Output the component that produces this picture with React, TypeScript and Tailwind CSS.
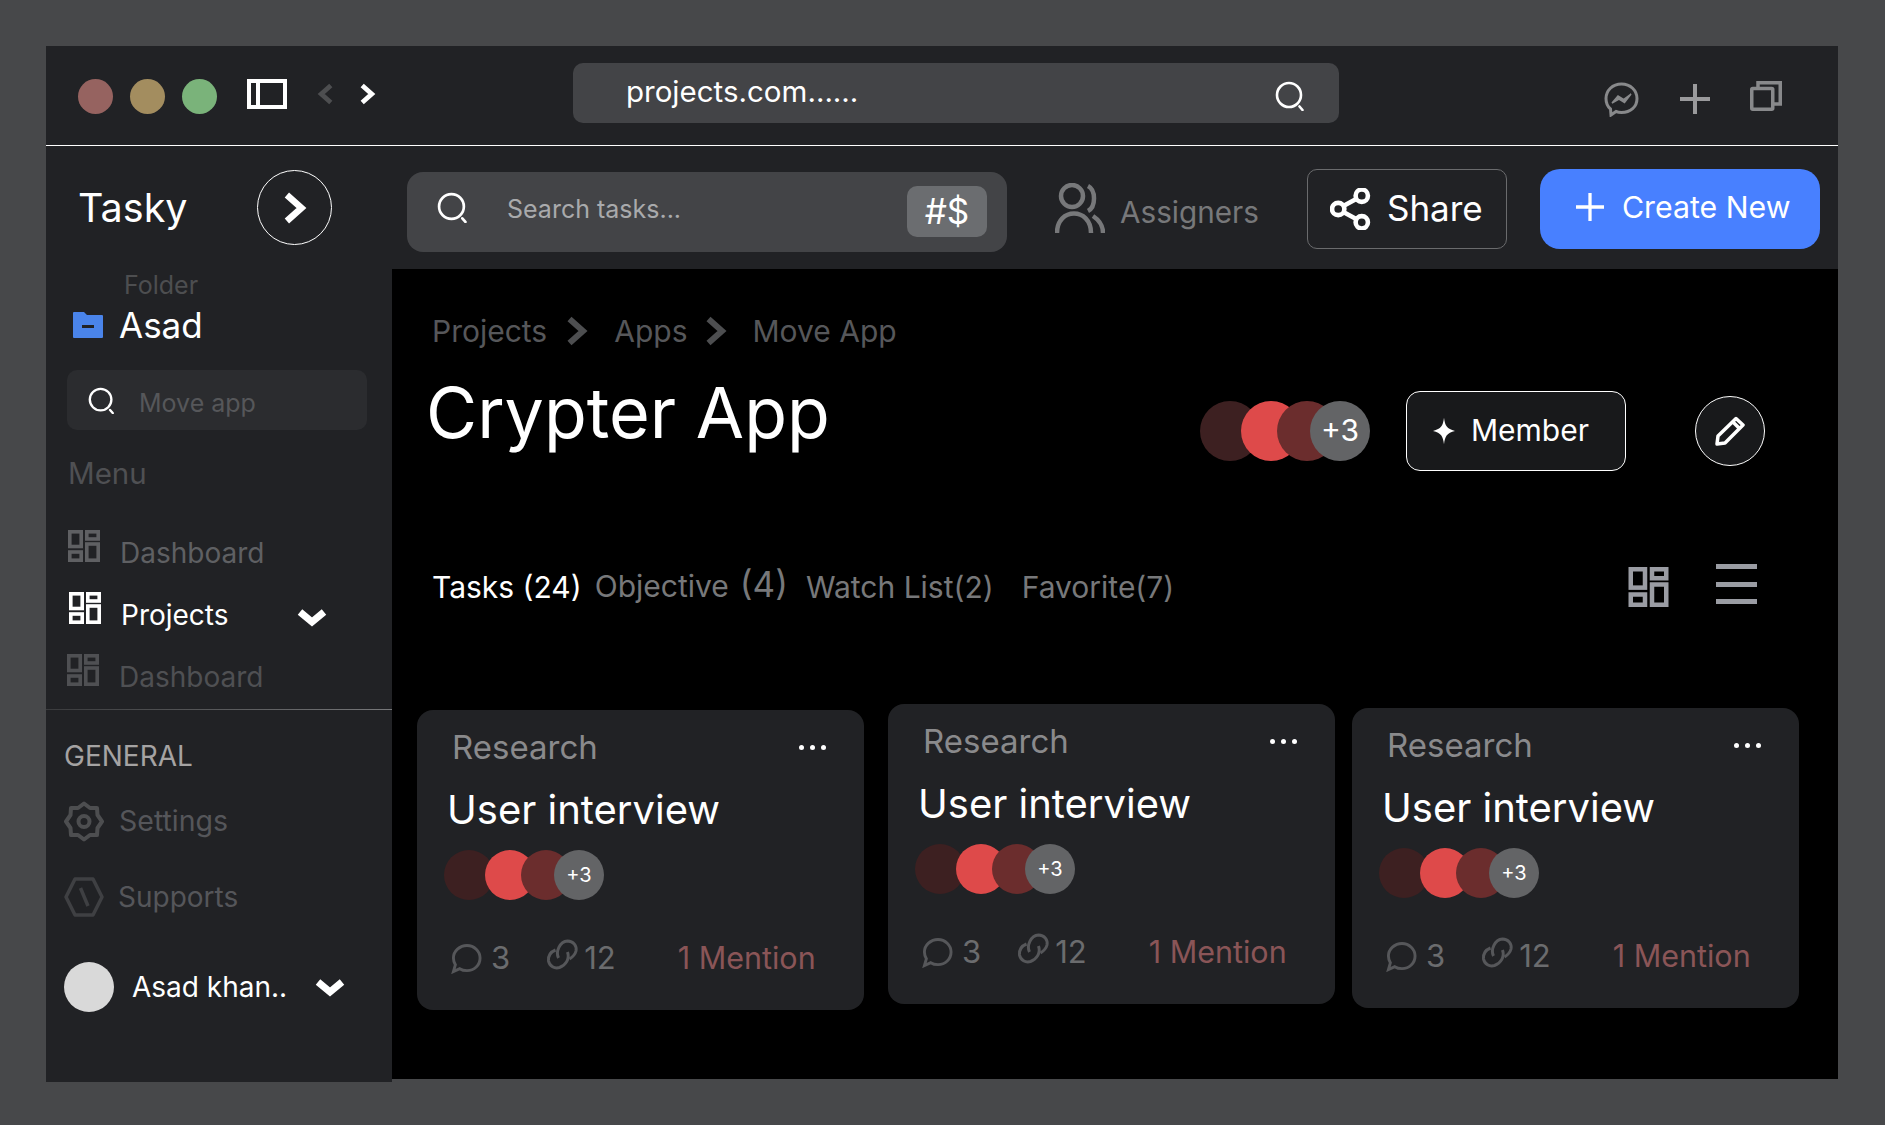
import React from 'react';

function Lens({ className }: { className: string }) {
  return (
    <svg className={className} viewBox="0 0 30 30" fill="none" stroke="currentColor" strokeWidth={2.6}>
      <circle cx="14" cy="14" r="12" />
      <path d="M24.5 25.5 L27.5 29" strokeLinecap="round" />
    </svg>
  );
}

function Chevron({ className, width = 4 }: { className: string; width?: number }) {
  return (
    <svg className={className} viewBox="0 0 16 20" fill="none" stroke="currentColor" strokeWidth={width}>
      <path d="M3 2 L12 10 L3 18" />
    </svg>
  );
}

function ChevronDown({ className }: { className: string }) {
  return (
    <svg className={className} viewBox="0 0 30 20" fill="none" stroke="currentColor" strokeWidth={7}>
      <path d="M3 5 L15 15 L27 5" />
    </svg>
  );
}

function PlusMark({ className, width = 4 }: { className: string; width?: number }) {
  return (
    <svg className={className} viewBox="0 0 30 30" fill="none" stroke="currentColor" strokeWidth={width}>
      <path d="M15 0 L15 30 M0 15 L30 15" />
    </svg>
  );
}

function GridIcon({ className }: { className: string }) {
  return (
    <svg className={className} viewBox="0 0 32 32" fill="none" stroke="currentColor" strokeWidth={3.6}>
      <rect x="1.8" y="1.8" width="11.4" height="14.7" />
      <rect x="18.8" y="1.8" width="11.4" height="7.2" />
      <rect x="1.8" y="22" width="11.4" height="8.2" />
      <rect x="18.8" y="14" width="11.4" height="16.2" />
    </svg>
  );
}

function NavRow({ label, className, textClass }: { label: string; className: string; textClass: string }) {
  return (
    <div className={`flex h-[40px] items-start ${className}`}>
      <GridIcon className={`h-[32px] w-[32px] ${textClass}`} />
      <span className={`ml-[20px] pt-[3px] text-[28px] leading-[40px] ${textClass}`}>{label}</span>
    </div>
  );
}

function Stack({ small }: { small: boolean }) {
  const size = small ? 'h-[50px] w-[50px]' : 'h-[60px] w-[60px]';
  return (
    <div className="flex items-center">
      <div className={`rounded-full bg-[#3d2021] ${size}`} />
      <div className={`rounded-full bg-[#de4a4a] ${size} ${small ? '-ml-[9px]' : '-ml-[19px]'}`} />
      <div className={`rounded-full bg-[#6b2d2d] ${size} ${small ? '-ml-[14px]' : '-ml-[24px]'}`} />
      <div
        className={`flex items-center justify-center rounded-full bg-[#636466] text-white ${size} ${
          small ? '-ml-[17px] text-[20px]' : '-ml-[27px] text-[30px]'
        }`}
      >
        +3
      </div>
    </div>
  );
}

function Card({ className }: { className: string }) {
  return (
    <div className={`h-[300px] w-[447px] rounded-[16px] bg-[#212225] pt-[17px] ${className}`}>
      <div className="flex h-[40px] items-center justify-between pl-[35px] pr-[38px]">
        <span className="text-[33px] leading-[40px] text-[#8a8a8c]">Research</span>
        <div className="flex gap-[6px]">
          <div className="h-[5px] w-[5px] rounded-full bg-white" />
          <div className="h-[5px] w-[5px] rounded-full bg-white" />
          <div className="h-[5px] w-[5px] rounded-full bg-white" />
        </div>
      </div>
      <div className="mt-[19px] pl-[30px] text-[40px] leading-[48px] text-white">User interview</div>
      <div className="mt-[16px] pl-[27px]">
        <Stack small />
      </div>
      <div className="mt-[43px] flex h-[30px] items-center pl-[34px] text-[31px] text-[#6b6c6e]">
        <svg className="h-[31px] w-[31px] text-[#56575a]" viewBox="0 0 32 32" fill="none" stroke="currentColor" strokeWidth={3}>
          <path d="M16.5 2.5 C24 2.5 30 8.5 30 15.5 C30 23 24 28.5 16.5 28.5 C13.5 28.5 11 27.8 9 26.5 L2.5 29.5 L4.5 22.5 C3.3 20.5 2.5 18 2.5 15.5 C2.5 8.5 9 2.5 16.5 2.5 Z" />
        </svg>
        <span className="ml-[9px]">3</span>
        <svg className="-mt-[6px] ml-[36px] h-[32px] w-[33px] text-[#56575a]" viewBox="0 0 32 32" fill="none" stroke="currentColor" strokeWidth={3}>
          <path d="M12 19 C9 13 13 2.5 21 2 C27 2 30.5 7 29.5 12 C28.5 16 26 18 23 20" />
          <path d="M9 11 C4 13 1.5 17 2 22 C3 27 8 30 13 28.5 C19 26.5 23.5 20 21 13" />
        </svg>
        <span className="ml-[5px]">12</span>
        <span className="ml-[62px] text-[30.5px] text-[#8a5557]">1 Mention</span>
      </div>
    </div>
  );
}

function Sidebar() {
  return (
    <aside className="w-[346px] shrink-0 bg-[#212225]">
      <div className="flex h-[123px] items-center pl-[32px]">
        <span className="mt-[2px] w-[110px] text-[39.5px] leading-none text-white">Tasky</span>
        <div className="ml-[69px] flex h-[75px] w-[75px] items-center justify-center rounded-full border border-white">
          <Chevron className="h-[34px] w-[26px] text-white" />
        </div>
      </div>
      <div className="pl-[78px] pt-[1px] text-[25px] leading-[30px] text-[#4d4e50]">Folder</div>
      <div className="mt-[7px] flex h-[36px] items-center pl-[27px]">
        <svg className="h-[26px] w-[30px]" viewBox="0 0 30 26">
          <path d="M0 1 Q0 0 1 0 L11 0 L14 3 L29 3 Q30 3 30 4 L30 25 Q30 26 29 26 L1 26 Q0 26 0 25 Z" fill="#4a84ea" />
          <rect x="9" y="13" width="12" height="3" fill="#212225" />
        </svg>
        <span className="ml-[16px] text-[35px] leading-[36px] text-white">Asad</span>
      </div>
      <div className="ml-[21px] mt-[27px] flex h-[60px] w-[300px] items-center rounded-[10px] bg-[#2b2c2f] pl-[21px]">
        <Lens className="h-[27px] w-[27px] text-white" />
        <span className="ml-[24px] mt-[8px] text-[25px] text-[#56575a]">Move app</span>
      </div>
      <div className="mt-[25px] pl-[22px] text-[29.5px] leading-[36px] text-[#4f5053]">Menu</div>
      <NavRow label="Dashboard" className="ml-[22px] mt-[39px]" textClass="text-[#5f6063]" />
      <div className="relative">
        <NavRow label="Projects" className="ml-[23px] mt-[22px]" textClass="text-white" />
        <ChevronDown className="absolute left-[251px] top-[15px] h-[20px] w-[30px] text-white" />
      </div>
      <NavRow label="Dashboard" className="ml-[21px] mt-[22px]" textClass="text-[#4f5053]" />
      <div className="mt-[15px] h-px bg-gradient-to-r from-[#3a3b3d] to-[#77787a]" />
      <div className="mt-[28px] pl-[18px] text-[28px] leading-[36px] text-[#a5a3a3]">GENERAL</div>
      <div className="mt-[27px] flex h-[41px] items-center pl-[18px]">
        <svg className="h-[41px] w-[40px] text-[#4d4e50]" viewBox="0 0 40 41" fill="none" stroke="currentColor" strokeWidth={4}>
          <path d="M20 2.5 L26 7 L33 7 L33.5 14 L38 20.5 L33.5 27 L33 34 L26 34 L20 38.5 L14 34 L7 34 L6.5 27 L2 20.5 L6.5 14 L7 7 L14 7 Z" strokeLinejoin="round" />
          <circle cx="20" cy="20.5" r="5.5" />
        </svg>
        <span className="ml-[15px] text-[28.5px] text-[#55565a]">Settings</span>
      </div>
      <div className="mt-[35px] flex h-[40px] items-center pl-[18px]">
        <svg className="h-[40px] w-[40px] text-[#3f4043]" viewBox="0 0 40 40" fill="none" stroke="currentColor" strokeWidth={3.5}>
          <path d="M11 2 L29 2 L38 20 L29 38 L11 38 L2 20 Z" strokeLinejoin="round" />
          <path d="M16.5 11 L24 29" />
        </svg>
        <span className="ml-[14px] text-[28px] text-[#55565a]">Supports</span>
      </div>
      <div className="mt-[45px] flex h-[50px] items-center pl-[18px]">
        <div className="h-[50px] w-[50px] rounded-full bg-[#d9d9d9]" />
        <span className="ml-[18px] text-[28px] text-white">Asad khan..</span>
        <ChevronDown className="ml-[28px] h-[20px] w-[30px] text-white" />
      </div>
    </aside>
  );
}

function TopRow() {
  return (
    <div className="flex h-[123px] items-center bg-[#212225]">
      <div className="ml-[15px] mt-[8px] flex h-[80px] w-[600px] items-center rounded-[16px] bg-[#434447] pl-[30px]">
        <Lens className="-mt-[8px] h-[31px] w-[31px] text-white" />
        <span className="ml-[39px] -mt-[3px] text-[25px] text-[#a9aaac]">Search tasks...</span>
        <div className="ml-auto mr-[20px] flex h-[51px] w-[80px] items-center justify-center rounded-[10px] bg-[#6b6d70] text-[35px] text-white">#$</div>
      </div>
      <svg className="ml-[48px] h-[50px] w-[50px] text-[#77787a]" viewBox="0 0 50 50" fill="none" stroke="currentColor" strokeWidth={4.5}>
        <circle cx="17" cy="13" r="11" />
        <path d="M33 3 C41 7 41 24 33 28" />
        <path d="M2 50 C2 24 36 24 36 50" />
        <path d="M38 33 C44 37 48 43 48 50" />
      </svg>
      <span className="ml-[15px] mt-[10px] text-[29.7px] text-[#77787a]">Assigners</span>
      <div className="ml-[48px] mt-[2px] flex h-[80px] w-[200px] items-center rounded-[10px] border border-[#6a6b6d] pl-[22px] text-white">
        <svg className="h-[42px] w-[41px]" viewBox="0 0 40 40" fill="none" stroke="currentColor" strokeWidth={4.5}>
          <circle cx="8" cy="20" r="6" />
          <circle cx="31" cy="7" r="6" />
          <circle cx="31" cy="33" r="6" />
          <path d="M13 17 L26 10 M13 23 L26 30" />
        </svg>
        <span className="ml-[16px] text-[35px]">Share</span>
      </div>
      <div className="ml-[33px] mt-[2px] flex h-[80px] w-[280px] items-center rounded-[20px] bg-[#4880ff] pl-[36px] text-white">
        <PlusMark className="-mt-[4px] h-[28px] w-[28px]" width={3.5} />
        <span className="ml-[18px] -mt-[2px] text-[30.3px]">Create New</span>
      </div>
    </div>
  );
}

function Content() {
  return (
    <div className="flex-1 bg-black">
      <div className="mt-[44px] flex h-[36px] items-center pl-[40px] text-[30px] text-[#56575a]">
        <span>Projects</span>
        <Chevron className="ml-[18px] h-[34px] w-[24px] text-[#4d4e50]" />
        <span className="ml-[25px]">Apps</span>
        <Chevron className="ml-[17px] h-[34px] w-[24px] text-[#4d4e50]" />
        <span className="ml-[24px]">Move App</span>
      </div>
      <div className="mt-[26px] flex items-start pl-[34px] pr-[73px]">
        <h1 className="text-[70px] leading-[76px] text-white">Crypter App</h1>
        <div className="ml-auto mt-[16px] flex h-[79px] items-center">
          <Stack small={false} />
          <div className="ml-[36px] flex h-[80px] w-[220px] items-center rounded-[14px] border border-white bg-[#18191b] pl-[26px] text-white">
            <svg className="h-[28px] w-[22px]" viewBox="0 0 20 24" fill="currentColor">
              <path d="M10 0 C11 7.5 12.5 10 20 12 C12.5 14 11 16.5 10 24 C9 16.5 7.5 14 0 12 C7.5 10 9 7.5 10 0 Z" />
            </svg>
            <span className="ml-[16px] text-[30px]">Member</span>
          </div>
          <div className="ml-[69px] flex h-[70px] w-[70px] items-center justify-center rounded-full border border-white bg-[#18191b] text-white">
            <svg className="h-[30px] w-[30px]" viewBox="0 0 30 30" fill="none" stroke="currentColor" strokeWidth={3.5}>
              <path d="M2 28 L3 20 L21 2.5 L28 9 L10 27 Z" strokeLinejoin="round" />
              <path d="M18 6 L24.5 12.5" />
            </svg>
          </div>
        </div>
      </div>
      <div className="mt-[97px] flex h-[40px] items-center pl-[40px] pr-[81px] text-[30px] text-[#77787a]">
        <span className="text-white">Tasks (24)</span>
        <span className="ml-[13px] -mt-[2px]">Objective</span>
        <span className="ml-[11px] -mt-[6px] text-[35px]">(4)</span>
        <span className="ml-[18px] mt-[1px]">Watch List(2)</span>
        <span className="ml-[28px] mt-[1px]">Favorite(7)</span>
        <GridIcon className="ml-auto h-[40px] w-[41px] text-[#9a9ca3]" />
        <div className="ml-[47px] -mt-[6px] flex h-[40px] w-[41px] flex-col justify-between">
          <div className="h-[5px] bg-[#9a9ca3]" />
          <div className="h-[5px] bg-[#9a9ca3]" />
          <div className="h-[5px] bg-[#9a9ca3]" />
        </div>
      </div>
      <div className="mt-[97px] flex items-start">
        <Card className="ml-[25px] mt-[6px]" />
        <Card className="ml-[24px]" />
        <Card className="ml-[17px] mt-[4px]" />
      </div>
    </div>
  );
}

export default function App() {
  return (
    <div className="h-[1125px] w-[1885px] overflow-hidden bg-[#47484a] pl-[46px] pt-[46px] font-[family-name:Inter,sans-serif]">
      <div className="w-[1792px]">
        <header className="flex h-[100px] items-center border-b border-white bg-[#212225]">
          <div className="ml-[32px] mt-[2px] h-[35px] w-[35px] rounded-full bg-[#966360]" />
          <div className="ml-[17px] mt-[2px] h-[35px] w-[35px] rounded-full bg-[#a38d5f]" />
          <div className="ml-[17px] mt-[2px] h-[35px] w-[35px] rounded-full bg-[#7ab37a]" />
          <div className="ml-[30px] -mt-[3px] flex h-[30px] w-[40px] border-[4px] border-white">
            <div className="w-[9px] border-r-[4px] border-white" />
          </div>
          <Chevron className="ml-[30px] -mt-[3px] h-[22px] w-[17px] scale-x-[-1] text-[#4d4e50]" width={4.5} />
          <Chevron className="ml-[25px] -mt-[3px] h-[22px] w-[17px] text-white" width={4.5} />
          <div className="ml-[197px] -mt-[5px] flex h-[60px] w-[766px] items-center rounded-[10px] bg-[#434447] pl-[53px] pr-[34px]">
            <span className="-mt-[3px] text-[29.5px] text-white">projects.com......</span>
            <Lens className="ml-auto mt-[6px] h-[30px] w-[30px] text-white" />
          </div>
          <svg className="ml-[265px] mt-[8px] h-[35px] w-[35px] text-[#88898b]" viewBox="0 0 35 35" fill="none" stroke="currentColor" strokeWidth={3}>
            <path d="M17.5 2 C26.5 2 33 8.5 33 16.5 C33 25 26.5 30.5 17.5 30.5 C15.5 30.5 14 30.3 12 29.5 L7 33 L6.5 27 C3.5 24.5 2 21 2 16.5 C2 8.5 8.5 2 17.5 2 Z" />
            <path d="M8 21 L14 14 L19.5 17.5 L27 12 L20.5 20.5 L15 17 Z" fill="currentColor" strokeWidth={1.5} />
          </svg>
          <PlusMark className="ml-[41px] mt-[7px] h-[30px] w-[30px] text-[#9a9a9c]" />
          <svg className="ml-[40px] mt-[1px] h-[30px] w-[32px] text-[#88898b]" viewBox="0 0 32 30" fill="none" stroke="currentColor" strokeWidth={3.5}>
            <rect x="1.75" y="7.5" width="21" height="20.75" rx="1" />
            <path d="M8 7 L8 1.75 L30.25 1.75 L30.25 23 L23 23" />
          </svg>
        </header>
        <div className="flex h-[936px]">
          <Sidebar />
          <div className="mb-[3px] flex flex-1 flex-col">
            <TopRow />
            <Content />
          </div>
        </div>
      </div>
    </div>
  );
}
